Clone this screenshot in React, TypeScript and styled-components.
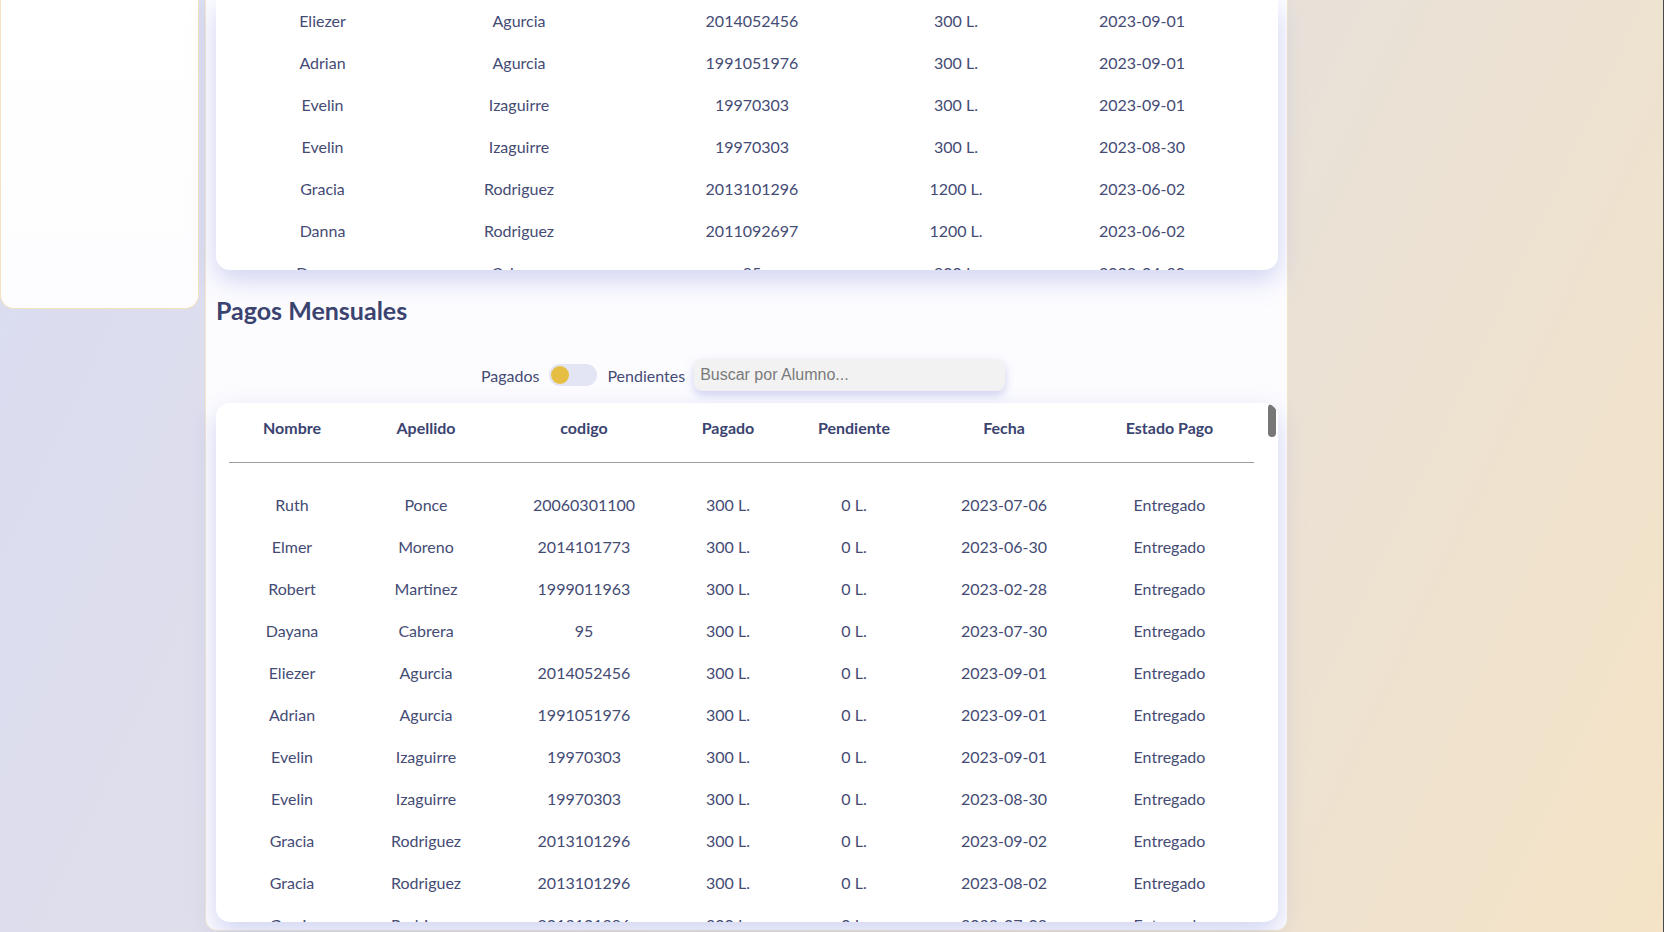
import React from "react";
import styled, { createGlobalStyle } from "styled-components";

const GlobalStyle = createGlobalStyle`
  html, body {
    margin: 0;
    padding: 0;
  }
  body {
    width: 1664px;
    height: 932px;
    overflow: hidden;
    font-family: Lato, "Noto Sans", sans-serif;
    background: linear-gradient(115deg, #d9dcf1 0%, #dfdeeb 30%, #e8e1da 60%, #f4e3c6 100%);
    box-shadow: inset -1px 0 0 #4a4a4a;
  }
`;

const Page = styled.div`
  display: flex;
  align-items: flex-start;
  gap: 6px;
  height: 932px;
`;

const Sidebar = styled.aside`
  box-sizing: border-box;
  width: 199px;
  height: 309px;
  background: linear-gradient(180deg, #ffffff 0%, #fdfdff 100%);
  border: 1px solid #f3e2bf;
  border-top: none;
  border-radius: 0 0 14px 14px;
`;

const Panel = styled.main`
  box-sizing: border-box;
  width: 1083px;
  height: 931px;
  display: flex;
  flex-direction: column;
  padding: 0 9px 9px 10px;
  background: #fcfcff;
  border: 1px solid #f3e6cc;
  border-top: none;
  border-radius: 0 0 12px 12px;
`;

const Card = styled.section<{ $height: number; $full?: boolean }>`
  position: relative;
  box-sizing: border-box;
  height: ${(p) => p.$height}px;
  flex-shrink: 0;
  background: #ffffff;
  border-radius: ${(p) => (p.$full ? "14px" : "0 0 14px 14px")};
  box-shadow: 0 10px 26px rgba(140, 146, 218, 0.38);
  padding: 0 24px 0 13px;
  overflow: hidden;
`;

const ScrollThumb = styled.div`
  position: absolute;
  top: 1px;
  right: 2px;
  width: 8px;
  height: 33px;
  border-radius: 4px;
  background: #777777;
`;

const Row = styled.div<{ $cols: string; $head?: boolean }>`
  display: grid;
  grid-template-columns: ${(p) => p.$cols};
  width: 1025px;
  height: ${(p) => (p.$head ? 50 : 42)}px;
  align-items: center;
  font-size: 16px;
  font-weight: ${(p) => (p.$head ? 700 : 400)};
  color: ${(p) => (p.$head ? "#3b4370" : "#444b74")};
`;

const Cell = styled.div`
  text-align: center;
  white-space: nowrap;
  line-height: 20px;
`;

const Divider = styled.hr`
  width: 1025px;
  margin: 9px 0 21px 0;
  border: none;
  border-top: 1px solid #9c9c9c;
`;

const Heading = styled.h2`
  margin: 24px 0 0 0;
  font-size: 25px;
  line-height: 32px;
  font-weight: 700;
  color: #3b4370;
`;

const FilterBar = styled.div`
  display: flex;
  align-items: center;
  justify-content: center;
  margin: 33px 0 12px -8px;
  height: 32px;
  font-size: 16px;
  color: #444b74;
`;

const FilterLabel = styled.span<{ $gap: number }>`
  margin-right: ${(p) => p.$gap}px;
`;

const Toggle = styled.div`
  box-sizing: border-box;
  width: 48px;
  height: 22px;
  border-radius: 11px;
  background: #e3e5f5;
  padding: 2px;
  margin-right: 10px;
  display: flex;
  align-items: center;
`;

const Knob = styled.div`
  width: 18px;
  height: 18px;
  border-radius: 50%;
  background: #e6be43;
`;

const SearchInput = styled.input`
  box-sizing: border-box;
  width: 311px;
  height: 32px;
  border: none;
  outline: none;
  border-radius: 8px;
  background: #f2f2f3;
  padding: 0 6px;
  font-family: "Liberation Sans", Arial, sans-serif;
  font-size: 16px;
  color: #333;
  box-shadow: 0 4px 10px rgba(140, 146, 218, 0.4);

  &::placeholder {
    color: #7a7a7a;
  }
`;

const TOP_COLS = "187px 206px 260px 148px 224px";
const BOTTOM_COLS = "126px 142px 174px 114px 138px 162px 169px";

const topRows = [
  ["Eliezer", "Agurcia", "2014052456", "300 L.", "2023-09-01"],
  ["Adrian", "Agurcia", "1991051976", "300 L.", "2023-09-01"],
  ["Evelin", "Izaguirre", "19970303", "300 L.", "2023-09-01"],
  ["Evelin", "Izaguirre", "19970303", "300 L.", "2023-08-30"],
  ["Gracia", "Rodriguez", "2013101296", "1200 L.", "2023-06-02"],
  ["Danna", "Rodriguez", "2011092697", "1200 L.", "2023-06-02"],
  ["Dayana", "Cabrera", "95", "900 L.", "2023-04-30"],
];

const bottomRows = [
  ["Ruth", "Ponce", "20060301100", "300 L.", "0 L.", "2023-07-06", "Entregado"],
  ["Elmer", "Moreno", "2014101773", "300 L.", "0 L.", "2023-06-30", "Entregado"],
  ["Robert", "Martinez", "1999011963", "300 L.", "0 L.", "2023-02-28", "Entregado"],
  ["Dayana", "Cabrera", "95", "300 L.", "0 L.", "2023-07-30", "Entregado"],
  ["Eliezer", "Agurcia", "2014052456", "300 L.", "0 L.", "2023-09-01", "Entregado"],
  ["Adrian", "Agurcia", "1991051976", "300 L.", "0 L.", "2023-09-01", "Entregado"],
  ["Evelin", "Izaguirre", "19970303", "300 L.", "0 L.", "2023-09-01", "Entregado"],
  ["Evelin", "Izaguirre", "19970303", "300 L.", "0 L.", "2023-08-30", "Entregado"],
  ["Gracia", "Rodriguez", "2013101296", "300 L.", "0 L.", "2023-09-02", "Entregado"],
  ["Gracia", "Rodriguez", "2013101296", "300 L.", "0 L.", "2023-08-02", "Entregado"],
  ["Gracia", "Rodriguez", "2013101296", "300 L.", "0 L.", "2023-07-02", "Entregado"],
];

const headers = ["Nombre", "Apellido", "codigo", "Pagado", "Pendiente", "Fecha", "Estado Pago"];

export default function App() {
  return (
    <>
      <GlobalStyle />
      <Page>
        <Sidebar />
        <Panel>
          <Card $height={270}>
            {topRows.map((r, i) => (
              <Row key={i} $cols={TOP_COLS}>
                {r.map((c, j) => (
                  <Cell key={j}>{c}</Cell>
                ))}
              </Row>
            ))}
          </Card>

          <Heading>Pagos Mensuales</Heading>

          <FilterBar>
            <FilterLabel $gap={10}>Pagados</FilterLabel>
            <Toggle>
              <Knob />
            </Toggle>
            <FilterLabel $gap={9}>Pendientes</FilterLabel>
            <SearchInput placeholder="Buscar por Alumno..." />
          </FilterBar>

          <Card $height={519} $full>
            <ScrollThumb />
            <Row $cols={BOTTOM_COLS} $head>
              {headers.map((h) => (
                <Cell key={h}>{h}</Cell>
              ))}
            </Row>
            <Divider />
            {bottomRows.map((r, i) => (
              <Row key={i} $cols={BOTTOM_COLS}>
                {r.map((c, j) => (
                  <Cell key={j}>{c}</Cell>
                ))}
              </Row>
            ))}
          </Card>
        </Panel>
      </Page>
    </>
  );
}
